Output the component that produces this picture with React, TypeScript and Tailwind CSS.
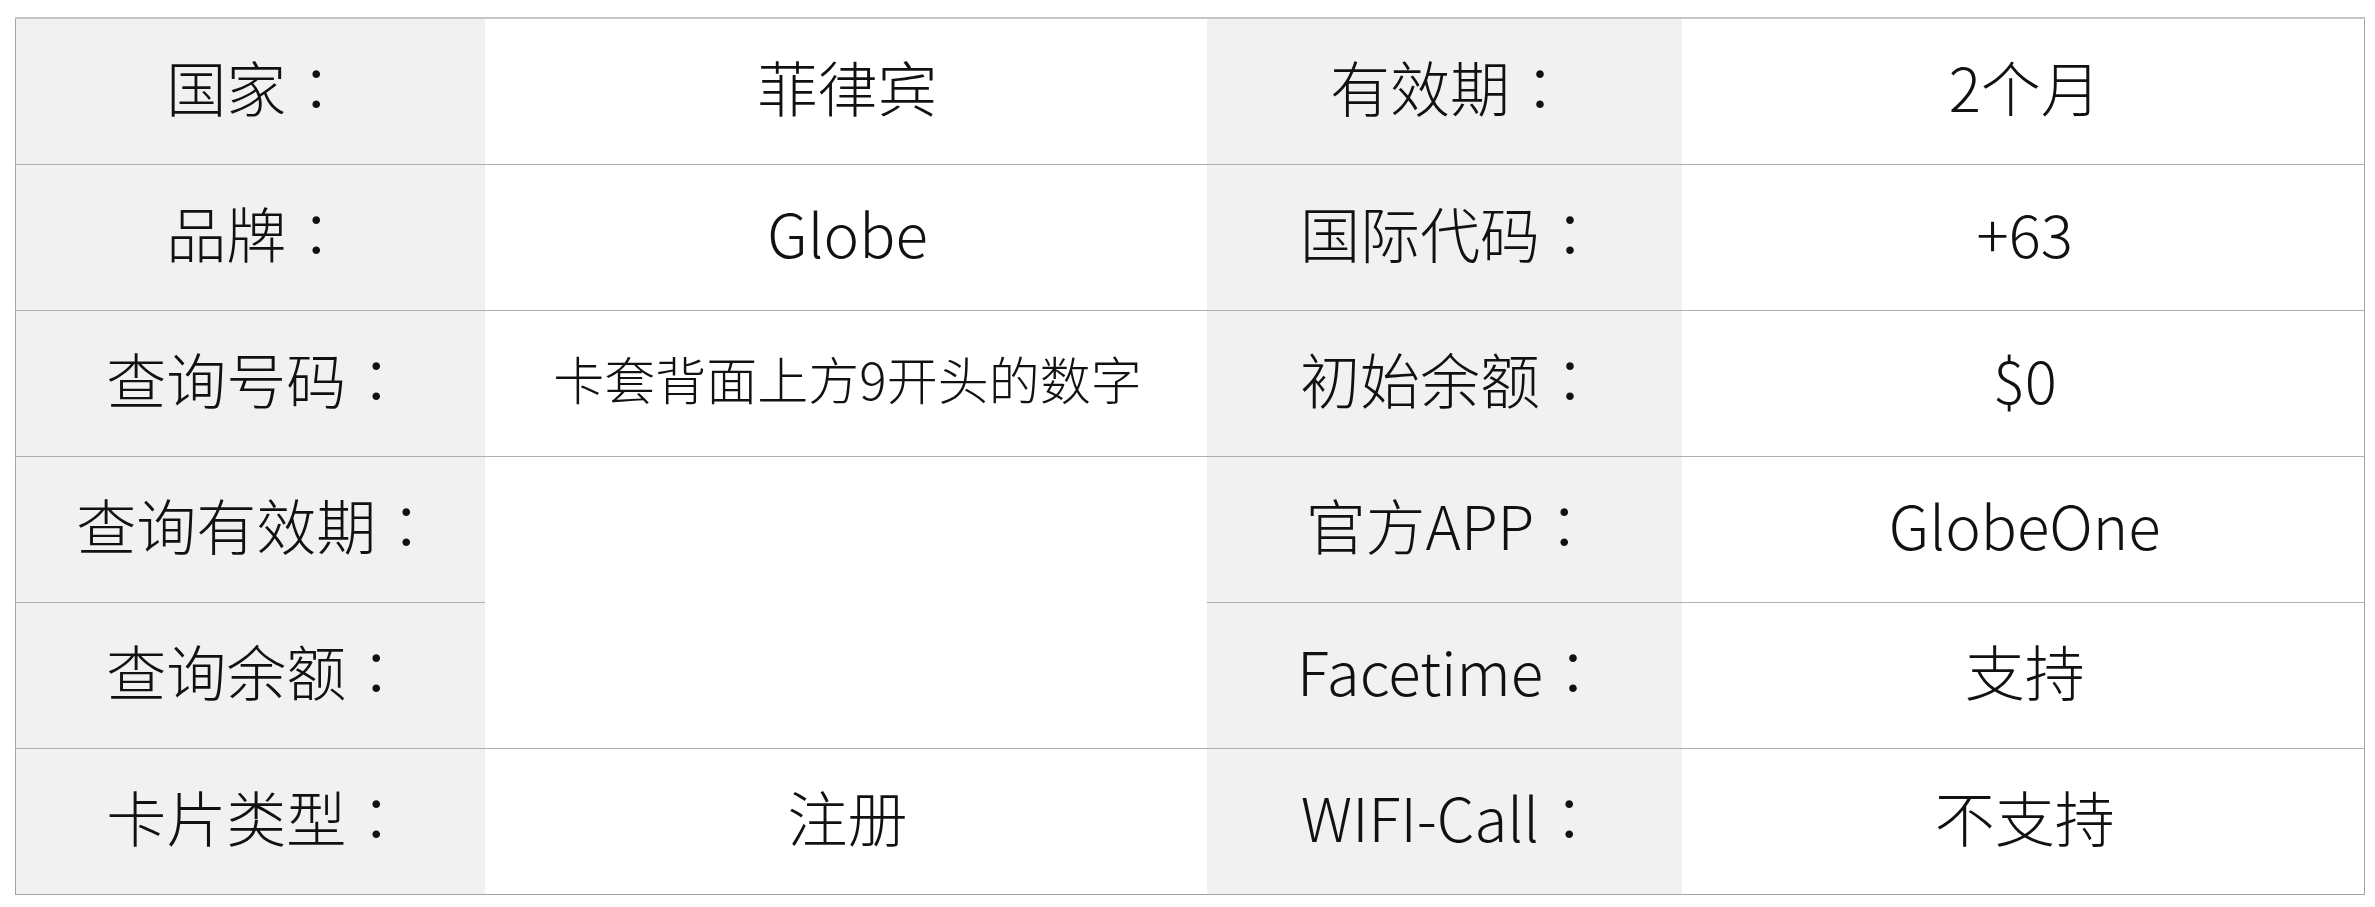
import React from "react";

type Cell = { text: string; label?: boolean; small?: boolean; rowSpan?: number };

const rows: Cell[][] = [
  [{ text: "国家", label: true }, { text: "菲律宾" }, { text: "有效期", label: true }, { text: "2个月" }],
  [{ text: "品牌", label: true }, { text: "Globe" }, { text: "国际代码", label: true }, { text: "+63" }],
  [{ text: "查询号码", label: true }, { text: "卡套背面上方9开头的数字", small: true }, { text: "初始余额", label: true }, { text: "$0" }],
  [{ text: "查询有效期", label: true }, { text: "", rowSpan: 2 }, { text: "官方APP", label: true }, { text: "GlobeOne" }],
  [{ text: "查询余额", label: true }, { text: "Facetime", label: true }, { text: "支持" }],
  [{ text: "卡片类型", label: true }, { text: "注册" }, { text: "WIFI-Call", label: true }, { text: "不支持" }],
];

export default function App() {
  return (
    <div className="min-h-[907px] w-[2375px] bg-white pl-[15px] pt-[17px]">
      <table
        className="w-[2349px] table-fixed border-collapse border-t-2 border-t-[#c6c6c6] border-x border-b border-x-[#a3a3a3] border-b-[#a3a3a3] text-[#111]"
        style={{ fontFamily: '"Noto Sans CJK SC", "Noto Sans", sans-serif' }}
      >
        <colgroup>
          <col className="w-[469px]" />
          <col className="w-[722px]" />
          <col className="w-[475px]" />
          <col className="w-[683px]" />
        </colgroup>
        <tbody>
          {rows.map((row, ri) => (
            <tr key={ri} className="h-[146px]">
              {row.map((c, ci) => (
                <td
                  key={ci}
                  rowSpan={c.rowSpan}
                  className={`border-t border-[#b0b0b0] p-0 pb-[10px] text-center align-middle font-light leading-none ${
                    c.label ? "bg-[#f1f1f1] pl-[12px]" : "bg-white pl-[4px]"
                  } ${c.small ? "text-[51px]" : "text-[60px]"}`}
                  style={ri === 0 ? { borderTopWidth: 0 } : undefined}
                >
                  {c.text}
                  {c.label && (
                    <span style={{ fontFamily: '"Noto Sans CJK TC", sans-serif' }}>：</span>
                  )}
                </td>
              ))}
            </tr>
          ))}
        </tbody>
      </table>
    </div>
  );
}
